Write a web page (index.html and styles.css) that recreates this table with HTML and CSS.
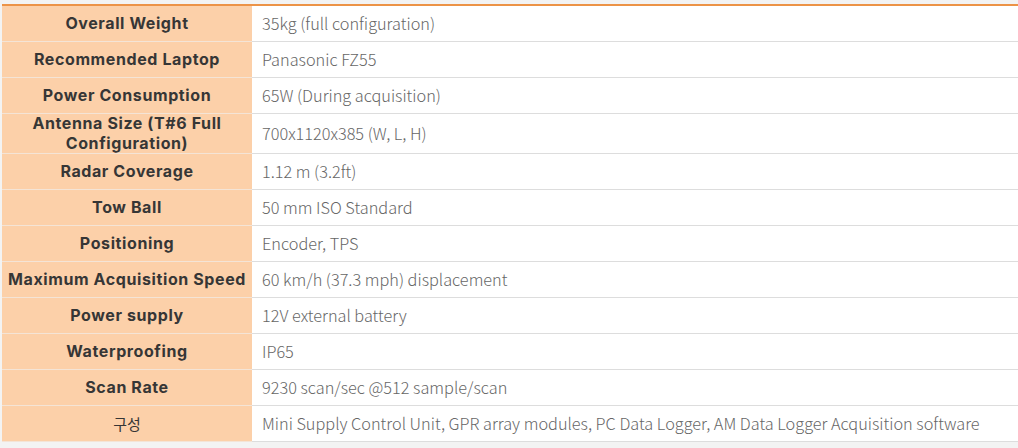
FILE: index.html
```html
<!DOCTYPE html>
<html lang="en">
<head>
<meta charset="utf-8">
<title>Specifications</title>
<link rel="stylesheet" href="styles.css">
</head>
<body>
<table class="spec">
  <tbody>
    <tr><th>Overall Weight</th><td>35kg (full configuration)</td></tr>
    <tr><th>Recommended Laptop</th><td>Panasonic FZ55</td></tr>
    <tr><th>Power Consumption</th><td>65W (During acquisition)</td></tr>
    <tr><th>Antenna Size (T#6 Full<br>Configuration)</th><td>700x1120x385 (W, L, H)</td></tr>
    <tr><th>Radar Coverage</th><td>1.12 m (3.2ft)</td></tr>
    <tr><th>Tow Ball</th><td>50 mm ISO Standard</td></tr>
    <tr><th>Positioning</th><td>Encoder, TPS</td></tr>
    <tr><th>Maximum Acquisition Speed</th><td>60 km/h (37.3 mph) displacement</td></tr>
    <tr><th>Power supply</th><td>12V external battery</td></tr>
    <tr><th>Waterproofing</th><td>IP65</td></tr>
    <tr><th>Scan Rate</th><td>9230 scan/sec @512 sample/scan</td></tr>
    <tr><th class="ko">구성</th><td>Mini Supply Control Unit, GPR array modules, PC Data Logger, AM Data Logger Acquisition software</td></tr>
  </tbody>
</table>
</body>
</html>
```
FILE: styles.css
```css
html, body {
  margin: 0;
  padding: 0;
  background: #f3f3f3;
}
body {
  padding: 4px 0 0 2px;
}
.spec {
  width: 1016px;
  border-collapse: collapse;
  border-top: 2px solid #ec9347;
  background: #ffffff;
}
.spec th,
.spec td {
  height: 35px;
  padding: 0 10px;
  line-height: 19.5px;
  border-bottom: 1px solid #dddddd;
  vertical-align: middle;
}
.spec th {
  background: #fcd0a9;
  color: #363636;
  font-family: "Inter", "Noto Sans CJK KR", sans-serif;
  font-weight: 700;
  font-size: 16px;
  letter-spacing: 0.6px;
  text-align: center;
  border-bottom-color: #f4e4d6;
  padding: 0 2px;
  width: 246px;
}
.spec th.ko {
  font-family: "Noto Sans CJK KR", sans-serif;
  font-weight: 400;
  font-size: 15px;
  letter-spacing: 0;
}
.spec td {
  color: #666666;
  font-family: "Noto Sans CJK KR", "Noto Sans", sans-serif;
  font-weight: 300;
  font-size: 16.3px;
  text-align: left;
}
```
